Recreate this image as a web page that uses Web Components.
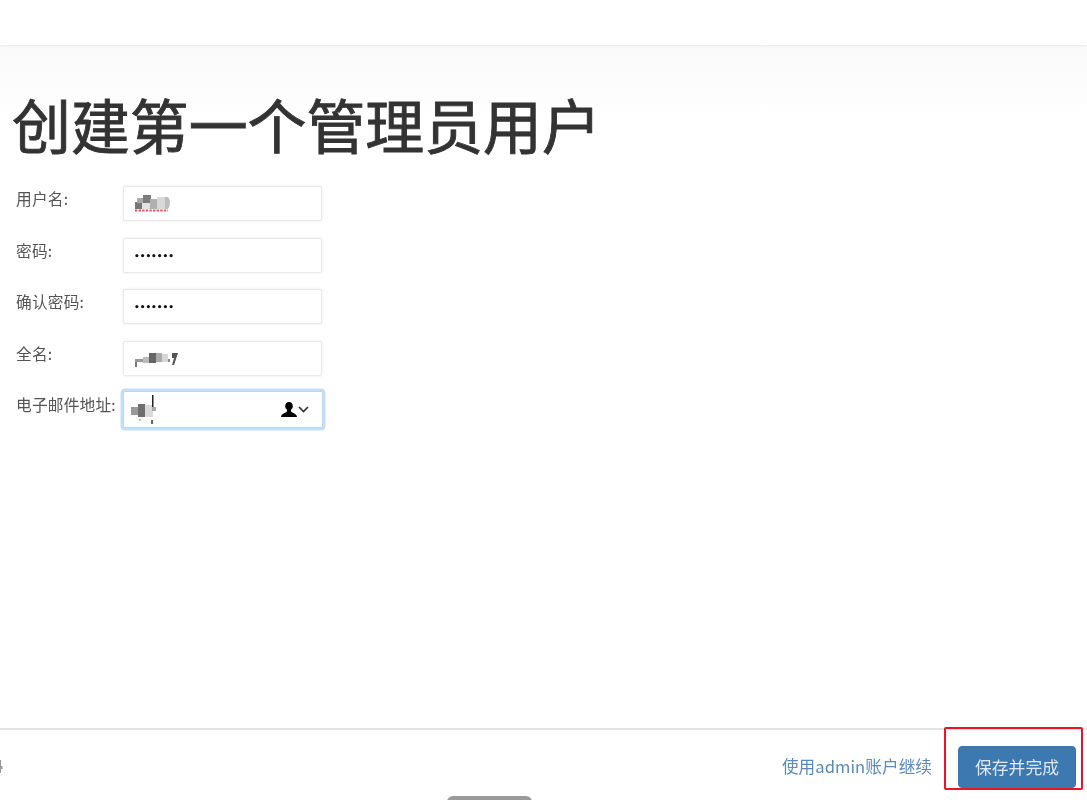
<!DOCTYPE html>
<html lang="zh-CN">
<head>
<meta charset="utf-8">
<title>创建第一个管理员用户</title>
<style>
html,body{margin:0;padding:0;height:100%;background:#fff;overflow:hidden}
body{font-family:"Liberation Sans","Noto Sans CJK SC",sans-serif;color:#333}
</style>
</head>
<body>
<setup-page>
  <setup-title slot="title">创建第一个管理员用户</setup-title>
  <form-row label="用户名:"><text-field><pixel-mask kind="user"></pixel-mask></text-field></form-row>
  <form-row label="密码:"><text-field><span class="dots">•••••••</span></text-field></form-row>
  <form-row label="确认密码:"><text-field><span class="dots">•••••••</span></text-field></form-row>
  <form-row label="全名:"><text-field><pixel-mask kind="name"></pixel-mask></text-field></form-row>
  <form-row label="电子邮件地址:" tight><text-field focused><pixel-mask kind="mail"></pixel-mask><autofill-key slot="end"></autofill-key></text-field></form-row>
  <setup-footer slot="footer"></setup-footer>
</setup-page>
<style>
.dots{font:9px/1 "DejaVu Sans",sans-serif;letter-spacing:-.05px;color:#111;font-weight:700;position:relative;top:1px;left:-1px}
</style>
<script>
function def(name, css, html, extra){
  customElements.define(name, class extends HTMLElement{
    constructor(){super();const r=this.attachShadow({mode:'open'});r.innerHTML='<style>'+css+'</style>'+html;}
    connectedCallback(){if(extra)extra.call(this,this.shadowRoot);}
  });
}
def('setup-page',`
  :host{display:flex;flex-direction:column;height:800px;position:relative;overflow:hidden;background:#fff;filter:blur(.4px)}
  .top{flex:0 0 45px;background:#fff;box-shadow:0 1px 2px rgba(0,0,0,.07);position:relative;z-index:1}
  main{flex:1;min-height:0;padding:47px 0 0 12px;background:linear-gradient(#fafafa 0,#fcfcfc 40px,#fff 70px)}
  .form{display:flex;flex-direction:column;gap:17.5px;padding:0 0 0 4px;margin-top:30px}
  .pill{position:absolute;left:447px;bottom:-6px;width:85px;height:10px;border-radius:6px 6px 0 0;background:#9a9a9a;z-index:2}
`,`
  <div class="top"></div>
  <main><slot name="title"></slot><div class="form"><slot></slot></div></main>
  <slot name="footer"></slot>
  <div class="pill"></div>
`);
def('setup-title',`
  :host{display:block;font:400 58.9px/64px "Noto Sans CJK SC",sans-serif;color:#333;white-space:nowrap;-webkit-text-stroke:.9px #333}
`,`<slot></slot>`);
def('form-row',`
  :host{display:grid;grid-template-columns:107px 198px;align-items:start;height:34px;color:#555}
  label{font:15.7px/20px "Noto Sans CJK SC",sans-serif;padding-top:3px;white-space:nowrap;letter-spacing:.2px}
  :host([tight]) label{padding-top:3px}
`,`<label></label><slot></slot>`,function(r){r.querySelector('label').textContent=this.getAttribute('label');});
def('text-field',`
  :host{display:flex;align-items:center;box-sizing:border-box;height:35px;width:199px;padding:0 10px 0 11px;background:#fff;border:1px solid #e9e9e9;border-radius:2px;box-shadow:0 0 3px rgba(0,0,0,.09)}
  :host([focused]){height:37px;margin-top:-1px;width:200px;margin-left:0;border:1px solid #b7d7f3;box-shadow:0 0 0 2.500px #c4def6;padding:0 13px 0 7px}
  .v{flex:1;display:flex;align-items:center;min-width:0}
`,`<div class="v"><slot></slot></div><slot name="end"></slot>`);
const masks={
 user:`<svg width="38" height="20" viewBox="0 0 38 20">
   <rect x="0" y="8" width="7" height="7" fill="#777"/><rect x="2" y="4" width="7" height="5" fill="#aaa"/><rect x="8" y="1" width="8" height="8" fill="#7d7d7d"/><rect x="7" y="9" width="9" height="6" fill="#e2e2e2"/><rect x="15" y="5" width="7" height="10" fill="#b0b0b0"/><rect x="22" y="3" width="8" height="12" fill="#d8d8d8"/><path d="M30 3h3q4 5 0 12h-3z" fill="#bdbdbd"/>
   <path d="M0 16.500h33" stroke="#e8505c" stroke-width="2" stroke-dasharray="2.400 1.200"/></svg>`,
 name:`<svg width="44" height="22" viewBox="0 0 44 22">
   <rect x="0" y="12" width="8" height="3" fill="#999"/><rect x="0" y="15" width="2" height="5" fill="#777"/><rect x="8" y="10" width="6" height="6" fill="#bbb"/><rect x="14" y="6" width="7" height="10" fill="#666"/><rect x="21" y="6" width="6" height="9" fill="#aaa"/><rect x="27" y="7" width="6" height="8" fill="#d6d6d6"/><rect x="33" y="12" width="2" height="3" fill="#888"/><path d="M37 6h6l-4 12h-2l2-7h-2z" fill="#555"/></svg>`,
 mail:`<svg width="26" height="34" viewBox="0 0 26 34">
   <rect x="0" y="14" width="7" height="8" fill="#999"/><rect x="7" y="11" width="7" height="13" fill="#6e6e6e"/><rect x="14" y="12" width="8" height="12" fill="#dadada"/><rect x="21" y="2" width="1.500" height="14" fill="#222"/><rect x="21" y="14" width="4" height="4" fill="#aaa"/><rect x="20" y="27" width="2" height="4" fill="#666"/><rect x="8" y="26" width="2" height="1.500" fill="#aaa"/></svg>`
};
def('pixel-mask',`:host{display:block;line-height:0;filter:blur(.6px)}`,'',function(r){r.innerHTML+=masks[this.getAttribute('kind')];});
def('autofill-key',`:host{display:flex;align-items:center;gap:1px;line-height:0}`,`
  <svg width="16" height="15" viewBox="0 0 16 15"><path d="M8 0C5.500 0 4.200 1.700 4.200 4c0 1.700.7 3 1.800 3.800v1.400C6 10.800 0 11 0 15h16c0-4-6-4.200-6-5.800V7.800c1.100-.8 1.800-2.100 1.800-3.800C11.800 1.700 10.500 0 8 0z" fill="#000"/></svg>
  <svg width="11" height="7" viewBox="0 0 11 7"><path d="M1 1l4.500 4.500L10 1" fill="none" stroke="#333" stroke-width="1.700"/></svg>`);
def('setup-footer',`
  :host{display:flex;align-items:center;justify-content:flex-end;box-sizing:border-box;height:72px;flex:0 0 72px;border-top:2px solid #e4e4e4;padding:4px 11px 0 0;position:relative;background:#fff}
  a{font:16.6px/1 "Noto Sans CJK SC",sans-serif;letter-spacing:.08px;color:#5a8ab8;text-decoration:none;margin-right:26px;white-space:nowrap;position:relative;top:-1px}
  svg.edge{position:absolute;left:0;top:30px}
  .mark{position:relative;display:block}
  button{display:block;box-sizing:border-box;width:118px;height:42px;background:#3c79b0;border:1px solid #3a76ab;border-radius:4px;color:#dfe7ee;font:16.8px/1 "Noto Sans CJK SC",sans-serif;padding:0;white-space:nowrap}
  .red{position:absolute;left:-14px;top:-19px;width:139px;height:63px;box-sizing:border-box;border:2.500px solid #ee1228;border-radius:2px;pointer-events:none}
`,`
  <svg class="edge" width="3" height="13" viewBox="0 0 3 13"><path d="M0 0h1v6h1.500v3H1v4H0z" fill="#999"/></svg>
  <a href="#">使用admin账户继续</a>
  <span class="mark"><button>保存并完成</button><span class="red"></span></span>
`);
</script>
</body>
</html>
